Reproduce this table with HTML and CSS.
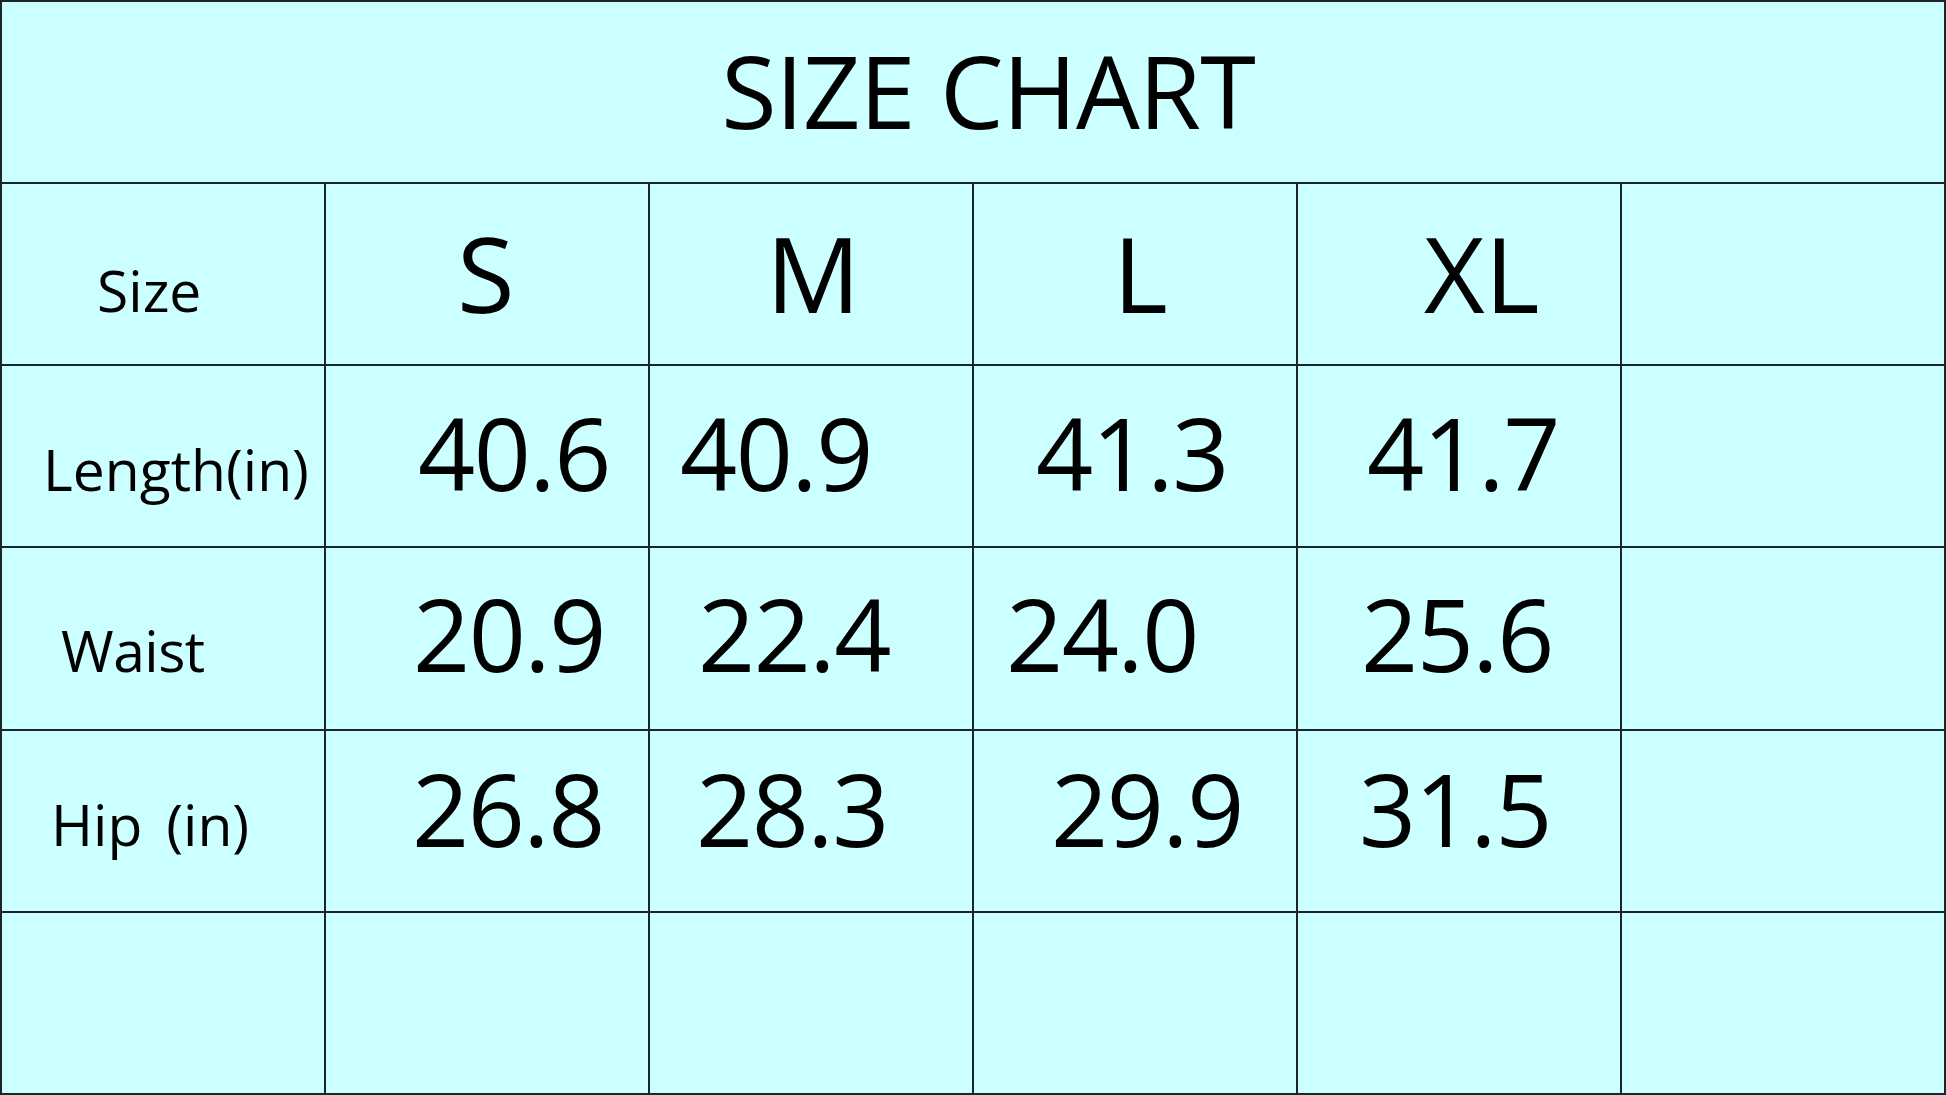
FILE: index.html
```html
<!DOCTYPE html>
<html lang="en">
<head>
<meta charset="utf-8">
<title>Size Chart</title>
<link rel="stylesheet" href="styles.css">
</head>
<body>
<div class="chart">
  <div class="title-bar"><h1 class="title">SIZE CHART</h1></div>

  <div class="row row-size">
    <div class="cell label lab-size">Size</div>
    <div class="cell size sz-s">S</div>
    <div class="cell size sz-m">M</div>
    <div class="cell size sz-l">L</div>
    <div class="cell size sz-xl">XL</div>
    <div class="cell"></div>
  </div>

  <div class="row row-length">
    <div class="cell label lab-length">Length(in)</div>
    <div class="cell num len-s">40.6</div>
    <div class="cell num len-m">40.9</div>
    <div class="cell num len-l">41.3</div>
    <div class="cell num len-xl">41.7</div>
    <div class="cell"></div>
  </div>

  <div class="row row-waist">
    <div class="cell label lab-waist">Waist</div>
    <div class="cell num wst-s">20.9</div>
    <div class="cell num wst-m">22.4</div>
    <div class="cell num wst-l">24.0</div>
    <div class="cell num wst-xl">25.6</div>
    <div class="cell"></div>
  </div>

  <div class="row row-hip">
    <div class="cell label lab-hip">Hip (in)</div>
    <div class="cell num hip-s">26.8</div>
    <div class="cell num hip-m">28.3</div>
    <div class="cell num hip-l">29.9</div>
    <div class="cell num hip-xl">31.5</div>
    <div class="cell"></div>
  </div>

  <div class="row row-empty">
    <div class="cell"></div>
    <div class="cell"></div>
    <div class="cell"></div>
    <div class="cell"></div>
    <div class="cell"></div>
    <div class="cell"></div>
  </div>
</div>
</body>
</html>
```

FILE: styles.css
```css
html, body {
  margin: 0;
  padding: 0;
  background: #ccffff;
}

.chart {
  box-sizing: border-box;
  width: 1946px;
  height: 1095px;
  border: 2px solid #1d2626;
  display: flex;
  flex-direction: column;
  background: #ccffff;
  font-family: "Open Sans", "Noto Sans", sans-serif;
  color: #000;
}

.title-bar {
  height: 180px;
  flex: none;
  border-bottom: 2px solid #1d2626;
  background: #ccffff;
}

.title {
  margin: 0;
  padding-top: 38px;
  padding-left: 30px;
  text-align: center;
  font-size: 101px;
  letter-spacing: -1px;
  line-height: 1;
  font-weight: 400;
}

.row {
  flex: 1;
  display: grid;
  grid-template-columns: repeat(6, 1fr);
  gap: 2px;
  background: #1d2626;
}

.row + .row {
  border-top: 2px solid #1d2626;
}

.cell {
  background: #ccffff;
  line-height: 1;
  white-space: nowrap;
  padding-top: calc(var(--base) - 0.888em);
}

.row-size   { --base: 129px; }
.row-length { --base: 125px; }
.row-waist  { --base: 123.8px; }
.row-hip    { --base: 116.1px; }
.row-empty  { --base: 0px; }
.row-empty .cell { padding-top: 0; }

.label { font-size: 57px; }
.size  { font-size: 105px; }
.num   { font-size: 100px; letter-spacing: -1.5px; }

.lab-size   { padding-left: 95px; }
.lab-length { padding-left: 41px; }
.lab-waist  { padding-left: 59px; letter-spacing: -0.5px; }
.lab-hip    { padding-left: 49px; word-spacing: 0.16em; }

.sz-s  { padding-left: 131px; }
.sz-m  { padding-left: 116px; }
.sz-l  { padding-left: 139px; }
.sz-xl { padding-left: 126px; }

.len-s  { padding-left: 92px; }
.len-m  { padding-left: 30px; }
.len-l  { padding-left: 62px; }
.len-xl { padding-left: 69px; }

.wst-s  { padding-left: 87px; }
.wst-m  { padding-left: 48px; }
.wst-l  { padding-left: 32px; }
.wst-xl { padding-left: 63px; }

.hip-s  { padding-left: 86px; }
.hip-m  { padding-left: 46px; }
.hip-l  { padding-left: 77px; }
.hip-xl { padding-left: 61px; }
```
